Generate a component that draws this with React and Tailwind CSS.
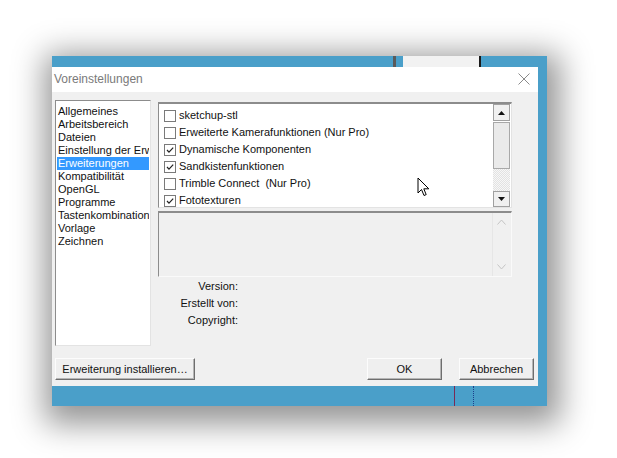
import React from 'react'

const leftItems = [
  'Allgemeines',
  'Arbeitsbereich',
  'Dateien',
  'Einstellung der Erweiterungen',
  'Erweiterungen',
  'Kompatibilität',
  'OpenGL',
  'Programme',
  'Tastenkombinationen',
  'Vorlage',
  'Zeichnen',
]

const extensions = [
  { name: 'sketchup-stl', checked: false },
  { name: 'Erweiterte Kamerafunktionen (Nur Pro)', checked: false },
  { name: 'Dynamische Komponenten', checked: true },
  { name: 'Sandkistenfunktionen', checked: true },
  { name: 'Trimble Connect  (Nur Pro)', checked: false },
  { name: 'Fototexturen', checked: true },
]

const CheckBox = ({ checked }) => (
  <div className="w-[12px] h-[12px] border border-[#7a7a7a] bg-white flex items-center justify-center shrink-0">
    {checked && (
      <svg width="10" height="10" viewBox="0 0 10 10">
        <path d="M2 5 L4 7.2 L8.2 2.6" fill="none" stroke="#222" strokeWidth="1.2" />
      </svg>
    )}
  </div>
)

const Arrow = ({ up }) => (
  <svg width="7" height="4" viewBox="0 0 7 4">
    <path d={up ? 'M0 4 L3.5 0 L7 4 Z' : 'M0 0 L3.5 4 L7 0 Z'} fill="#111" />
  </svg>
)

const Button = ({ children, className }) => (
  <div
    className={`h-[22px] flex items-center justify-center bg-[#efefef] border border-t-[#fcfcfc] border-l-[#fcfcfc] border-b-[#6e6e6e] border-r-[#6e6e6e] shadow-[inset_-1px_-1px_0_#b5b5b5] text-[11px] text-[#111] ${className}`}
  >
    {children}
  </div>
)

export default function App() {
  return (
    <div
      className="relative w-[617px] h-[458px] bg-white overflow-hidden pt-[56px] pl-[52px]"
      style={{ fontFamily: '"Liberation Sans", Arial, sans-serif' }}
    >
      {/* blue desktop window behind */}
      <div className="relative w-[495px] h-[350px] bg-[#4a9fc9] shadow-[3px_8px_30px_10px_rgba(0,0,0,0.42)] pt-[11px]">
        {/* strip at top */}
        <div className="absolute top-0 left-[341px] w-[3px] h-[11px] bg-[#5a5a5a]" />
        <div className="absolute top-0 left-[351px] w-[76px] h-[11px] bg-[#f2f2f2]" />
        <div className="absolute top-0 left-[427px] w-[2px] h-[11px] bg-[#1a1a1a]" />
        {/* lines bottom */}
        <div className="absolute bottom-0 left-[402px] w-[1px] h-[20px] bg-[#7a2a55]" />
        <div className="absolute bottom-0 left-[421px] w-0 h-[20px] border-l border-dotted border-[#1c3f8a]" />

        {/* dialog */}
        <div className="w-[486px] h-[319px] bg-[#f0f0f0] flex flex-col">
          <div className="h-[25px] bg-white flex items-center justify-between pl-[2px] pr-[8px]">
            <span className="text-[12px] text-[#7a7a7a] mt-[-1px]">Voreinstellungen</span>
            <svg width="12" height="12" viewBox="0 0 12 12" className="mt-[-1px]">
              <path d="M0.5 0.5 L11.5 11.5 M11.5 0.5 L0.5 11.5" stroke="#8a8a8a" strokeWidth="1" />
            </svg>
          </div>

          <div className="flex-1 pt-[8px] pl-[3px] flex flex-col">
            <div className="flex gap-[7px] h-[246px]">
              {/* left list */}
              <div className="w-[96px] h-[246px] bg-white border border-t-[#8c8c8c] border-l-[#8c8c8c] border-b-[#e3e3e3] border-r-[#e3e3e3] pt-[4px] pl-[1px] overflow-hidden">
                {leftItems.map((item) => (
                  <div
                    key={item}
                    className={`h-[13px] leading-[13px] text-[11px] pl-[1px] whitespace-nowrap overflow-hidden w-[92px] ${
                      item === 'Erweiterungen' ? 'bg-[#3399ff] text-white' : 'text-[#111]'
                    }`}
                  >
                    {item}
                  </div>
                ))}
              </div>

              {/* right column */}
              <div className="w-[354px] mt-[2px] flex flex-col">
                <div className="h-[106px] bg-white border border-t-[#8c8c8c] border-t-2 border-l-[#8c8c8c] border-b-[#e3e3e3] border-r-[#e3e3e3] flex">
                  <div className="flex-1 pt-[3px] pl-[5px]">
                    {extensions.map((ext) => (
                      <div key={ext.name} className="h-[17px] flex items-center gap-[3px]">
                        <CheckBox checked={ext.checked} />
                        <span className="text-[11px] leading-[13px] text-[#111] whitespace-pre">{ext.name}</span>
                      </div>
                    ))}
                  </div>
                  {/* scrollbar */}
                  <div className="w-[17px] flex flex-col mr-[1px]">
                    <div className="h-[17px] bg-[#f0f0f0] border border-[#a0a0a0] flex items-center justify-center">
                      <Arrow up />
                    </div>
                    <div className="h-[47px] mt-[1px] bg-[#eaeaea] border border-[#a8a8a8]" />
                    <div className="flex-1 bg-[repeating-conic-gradient(#e2e2e2_0_25%,#f7f7f7_0_50%)] bg-[length:2px_2px]" />
                    <div className="h-[16px] bg-[#f0f0f0] border border-[#a0a0a0] flex items-center justify-center">
                      <Arrow />
                    </div>
                  </div>
                </div>

                {/* description */}
                <div className="h-[66px] mt-[3px] border border-t-2 border-t-[#8c8c8c] border-l-[#8c8c8c] border-b-[#fafafa] border-r-[#fafafa] flex justify-end">
                  <div className="w-[17px] mr-[2px] border-l border-[#e6e6e6] flex flex-col items-center justify-between py-[6px]">
                    <svg width="9" height="6" viewBox="0 0 9 6">
                      <path d="M0.5 5.5 L4.5 1 L8.5 5.5" fill="none" stroke="#c4c4c4" strokeWidth="1" />
                    </svg>
                    <svg width="9" height="6" viewBox="0 0 9 6">
                      <path d="M0.5 0.5 L4.5 5 L8.5 0.5" fill="none" stroke="#c4c4c4" strokeWidth="1" />
                    </svg>
                  </div>
                </div>

                <div className="mt-[1px] w-[80px] flex flex-col items-end text-[11px] text-[#111]">
                  <div className="h-[17px] leading-[17px]">Version:</div>
                  <div className="h-[17px] leading-[17px]">Erstellt von:</div>
                  <div className="h-[17px] leading-[17px]">Copyright:</div>
                </div>
              </div>
            </div>

            {/* buttons */}
            <div className="mt-[12px] flex items-center">
              <Button className="w-[140px]">Erweiterung installieren…</Button>
              <Button className="w-[75px] ml-[172px]">OK</Button>
              <Button className="w-[75px] ml-[17px]">Abbrechen</Button>
            </div>
          </div>
        </div>
      </div>

      {/* mouse cursor */}
      <svg className="absolute left-[417px] top-[177px]" width="14" height="21" viewBox="0 0 14 21">
        <path
          d="M1 1 L1 16 L4.5 12.5 L7 18.5 L9.2 17.6 L6.8 11.8 L11.8 11.8 Z"
          fill="white"
          stroke="black"
          strokeWidth="1"
          strokeLinejoin="miter"
        />
      </svg>
    </div>
  )
}
